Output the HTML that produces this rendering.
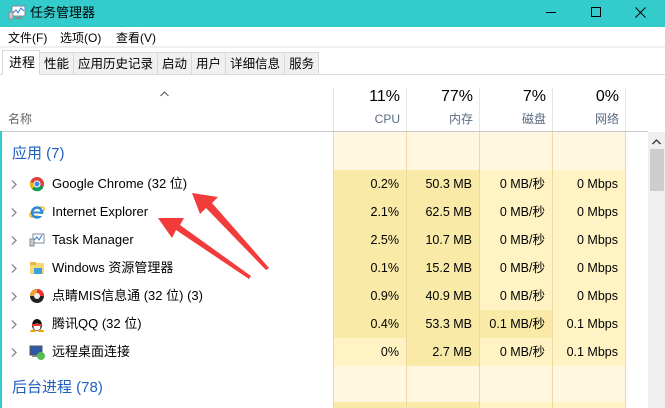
<!DOCTYPE html>
<html><head><meta charset="utf-8"><style>
*{margin:0;padding:0;box-sizing:border-box}
body{width:665px;height:408px;overflow:hidden;background:#fff;font-family:"Liberation Sans","Noto Sans CJK SC",sans-serif;font-size:12px;color:#000;position:relative}
.a{position:absolute;white-space:nowrap;line-height:16px}
.cell{position:absolute;text-align:right;padding-right:7px;line-height:28px;font-size:12.5px}
.tb div{padding:3px 4px;border-right:1px solid #d9d9d9}
</style></head><body>
<div class="a" style="left:0;top:0;width:665px;height:27px;background:#33cbcb"></div>
<svg class="a" style="left:8px;top:5px" width="18" height="16"><rect x="4" y="1" width="13" height="10" fill="#fff" stroke="#7a8a99"/><polyline points="5,8 8,5 10,8 13,3 16,6" fill="none" stroke="#2a7ad0"/><rect x="1" y="7" width="4" height="7" fill="#ccc" stroke="#888"/><rect x="7" y="12" width="7" height="2" fill="#888"/></svg>
<div class="a" style="left:30px;top:5px;font-size:13px">任务管理器</div>
<div class="a" style="left:546px;top:12px;width:10px;height:1px;background:#000"></div>
<div class="a" style="left:591px;top:7px;width:10px;height:10px;border:1px solid #000"></div>
<svg class="a" style="left:635px;top:7px" width="11" height="11"><path d="M0.5 0.5 L10.5 10.5 M10.5 0.5 L0.5 10.5" stroke="#000" stroke-width="1"/></svg>
<div class="a" style="left:8px;top:30px">文件(F)</div>
<div class="a" style="left:60px;top:30px">选项(O)</div>
<div class="a" style="left:116px;top:30px">查看(V)</div>
<div class="a" style="left:0;top:46px;width:665px;height:2px;background:#f0f0f0"></div>
<div class="a" style="left:0;top:74px;width:665px;height:1px;background:#d9d9d9"></div>
<div class="a" style="left:2px;top:50px;width:38px;height:25px;background:#fff;border:1px solid #d9d9d9;border-bottom:none;padding:4px 0 0 6px;font-size:13px">进程</div>
<div class="a tb" style="left:40px;top:52px;height:22px;display:flex;border-top:1px solid #d9d9d9;background:#f0f0f0;font-size:12.5px">
<div>性能</div><div>应用历史记录</div><div>启动</div><div>用户</div><div>详细信息</div><div>服务</div></div>
<svg class="a" style="left:160px;top:91px" width="9" height="6"><path d="M0.5 5 L4.5 1 L8.5 5" fill="none" stroke="#555"/></svg>
<div class="a" style="left:8px;top:111px;color:#666">名称</div>
<div class="a" style="left:0;top:131px;width:648px;height:1px;background:#c8c8c8"></div>
<div class="a" style="left:0;top:131px;width:2px;height:277px;background:#33cbcb"></div>
<div class="a" style="left:333px;top:88px;width:1px;height:43px;background:#e5e5e5"></div>
<div class="a" style="left:406px;top:88px;width:1px;height:43px;background:#e5e5e5"></div>
<div class="a" style="left:479px;top:88px;width:1px;height:43px;background:#e5e5e5"></div>
<div class="a" style="left:552px;top:88px;width:1px;height:43px;background:#e5e5e5"></div>
<div class="a" style="left:625px;top:88px;width:1px;height:43px;background:#e5e5e5"></div>
<div class="a" style="left:333px;top:89px;width:67px;text-align:right;font-size:16px">11%</div>
<div class="a" style="left:406px;top:89px;width:67px;text-align:right;font-size:16px">77%</div>
<div class="a" style="left:479px;top:89px;width:67px;text-align:right;font-size:16px">7%</div>
<div class="a" style="left:552px;top:89px;width:67px;text-align:right;font-size:16px">0%</div>
<div class="a" style="left:333px;top:111px;width:67px;text-align:right;color:#5a6a80">CPU</div>
<div class="a" style="left:406px;top:111px;width:67px;text-align:right;color:#5a6a80">内存</div>
<div class="a" style="left:479px;top:111px;width:67px;text-align:right;color:#5a6a80">磁盘</div>
<div class="a" style="left:552px;top:111px;width:67px;text-align:right;color:#5a6a80">网络</div>
<div class="a" style="left:333px;top:132px;width:293px;height:276px;background:#fff7e0"></div>
<div id="cells"></div>
<div class="a" style="left:406px;top:132px;width:1px;height:276px;background:#efd9a0"></div>
<div class="a" style="left:479px;top:132px;width:1px;height:276px;background:#efd9a0"></div>
<div class="a" style="left:552px;top:132px;width:1px;height:276px;background:#efd9a0"></div>
<div class="a" style="left:625px;top:132px;width:1px;height:276px;background:#efd9a0"></div>
<div class="a" style="left:333px;top:132px;width:1px;height:276px;background:#efd9a0"></div>
<div class="a" style="left:648px;top:132px;width:17px;height:276px;background:#f0f0f0"></div>
<svg class="a" style="left:652px;top:139px" width="9" height="6"><path d="M0.5 5 L4.5 1 L8.5 5" fill="none" stroke="#333" stroke-width="1.3"/></svg>
<div class="a" style="left:650px;top:149px;width:14px;height:42px;background:#cdcdcd"></div>
<div class="a" style="left:12px;top:145px;font-size:15px;line-height:18px;color:#1e5fbf">应用 (7)</div>
<div class="a" style="left:12px;top:379px;font-size:15px;line-height:18px;color:#1e5fbf">后台进程 (78)</div>
<div id="rows"></div>
<svg class="a" style="left:0;top:0" width="665" height="408">
<polygon points="192,193 218,197 212,203 269,268 266,270 206,208 200,214" fill="#f23b3b"/>
<polygon points="158,218 184,218 180,225 251,276 249,279 176,230 172,238" fill="#f23b3b"/>
</svg>
<script>
var rows=[["chrome","Google Chrome (32 位)","0.2%","50.3 MB","0 MB/秒","0 Mbps",0],
["ie","Internet Explorer","2.1%","62.5 MB","0 MB/秒","0 Mbps",0],
["tm","Task Manager","2.5%","10.7 MB","0 MB/秒","0 Mbps",0],
["win","Windows 资源管理器","0.1%","15.2 MB","0 MB/秒","0 Mbps",0],
["dq","点睛MIS信息通 (32 位) (3)","0.9%","40.9 MB","0 MB/秒","0 Mbps",0],
["qq","腾讯QQ (32 位)","0.4%","53.3 MB","0.1 MB/秒","0.1 Mbps",1],
["rd","远程桌面连接","0%","2.7 MB","0 MB/秒","0.1 Mbps",2]];
var icons={
chrome:'<circle cx="8" cy="8" r="7" fill="#db4437"/><path d="M8 8 L14.5 11 A7 7 0 0 1 3 13 Z" fill="#0f9d58"/><path d="M8 8 L3 13 A7 7 0 0 1 1.5 6 Z" fill="#f4b400"/><circle cx="8" cy="8" r="3.5" fill="#fff"/><circle cx="8" cy="8" r="2.5" fill="#4285f4"/>',
ie:'<ellipse cx="8" cy="8" rx="8" ry="3.5" fill="none" stroke="#f0b400" stroke-width="1.3" transform="rotate(-30 8 8)"/><circle cx="8" cy="8.5" r="5" fill="none" stroke="#2a8ad8" stroke-width="2.5"/><rect x="4" y="7.5" width="8" height="2" fill="#2a8ad8"/><rect x="9" y="10" width="5" height="2" fill="#fff"/>',
tm:'<rect x="4" y="2" width="11" height="9" fill="#fff" stroke="#7a8a99"/><polyline points="5,8 8,5 10,8 13,3" fill="none" stroke="#2a7ad0"/><rect x="1" y="7" width="4" height="7" fill="#ccc" stroke="#888"/>',
win:'<rect x="1" y="3" width="14" height="11" fill="#f8d775"/><rect x="1" y="2" width="6" height="3" fill="#e8b84a"/><rect x="5" y="8" width="8" height="6" fill="#3aa0e0"/>',
dq:'<circle cx="8" cy="8" r="7" fill="#222"/><path d="M1 8 A7 7 0 0 1 15 8 Z" fill="#f0a030"/><path d="M8 1 L8 8 L15 8 A7 7 0 0 0 8 1Z" fill="#e33"/><circle cx="8" cy="8" r="3" fill="#eee"/>',
qq:'<ellipse cx="8" cy="9" rx="5" ry="6" fill="#111"/><ellipse cx="8" cy="11" rx="3.5" ry="3.5" fill="#fff"/><rect x="3" y="8" width="10" height="2" fill="#e33"/><ellipse cx="4" cy="15" rx="3" ry="1.2" fill="#f0a000"/><ellipse cx="12" cy="15" rx="3" ry="1.2" fill="#f0a000"/>',
rd:'<rect x="1" y="2" width="12" height="9" fill="#2a5aa8" stroke="#555"/><rect x="3" y="11" width="8" height="2" fill="#888"/><circle cx="12" cy="12" r="4" fill="#5b5"/>'};
var h='',c='';
rows.forEach(function(r,i){var y=170+i*28;var cy=y+14;
h+='<svg class="a" style="left:11px;top:'+(cy-4)+'px" width="6" height="9"><path d="M1 0.5 L5 4.5 L1 8.5" fill="none" stroke="#888" stroke-width="1.3"/></svg>';
h+='<svg class="a" style="left:29px;top:'+(cy-8)+'px" width="16" height="16">'+icons[r[0]]+'</svg>';
h+='<div class="a" style="left:52px;top:'+(cy-9)+'px;font-size:13px;line-height:18px;height:18px">'+r[1]+'</div>';
var dark='#f9eaa8',mid='#fff3c4';
var bg=[r[6]==2?mid:dark,dark,r[6]==1?dark:mid,mid];
var xs=[333,406,479,552];
for(var k=0;k<4;k++)c+='<div class="cell" style="left:'+xs[k]+'px;top:'+y+'px;width:73px;height:28px;background:'+bg[k]+'">'+r[2+k]+'</div>';
});
document.getElementById('rows').innerHTML=h;
document.getElementById('cells').innerHTML=c+'<div class="a" style="left:333px;top:402px;width:73px;height:6px;background:#f9eaa8"></div><div class="a" style="left:406px;top:402px;width:73px;height:6px;background:#f9eaa8"></div><div class="a" style="left:479px;top:402px;width:146px;height:6px;background:#fff3c4"></div>';
</script>
</body></html>
